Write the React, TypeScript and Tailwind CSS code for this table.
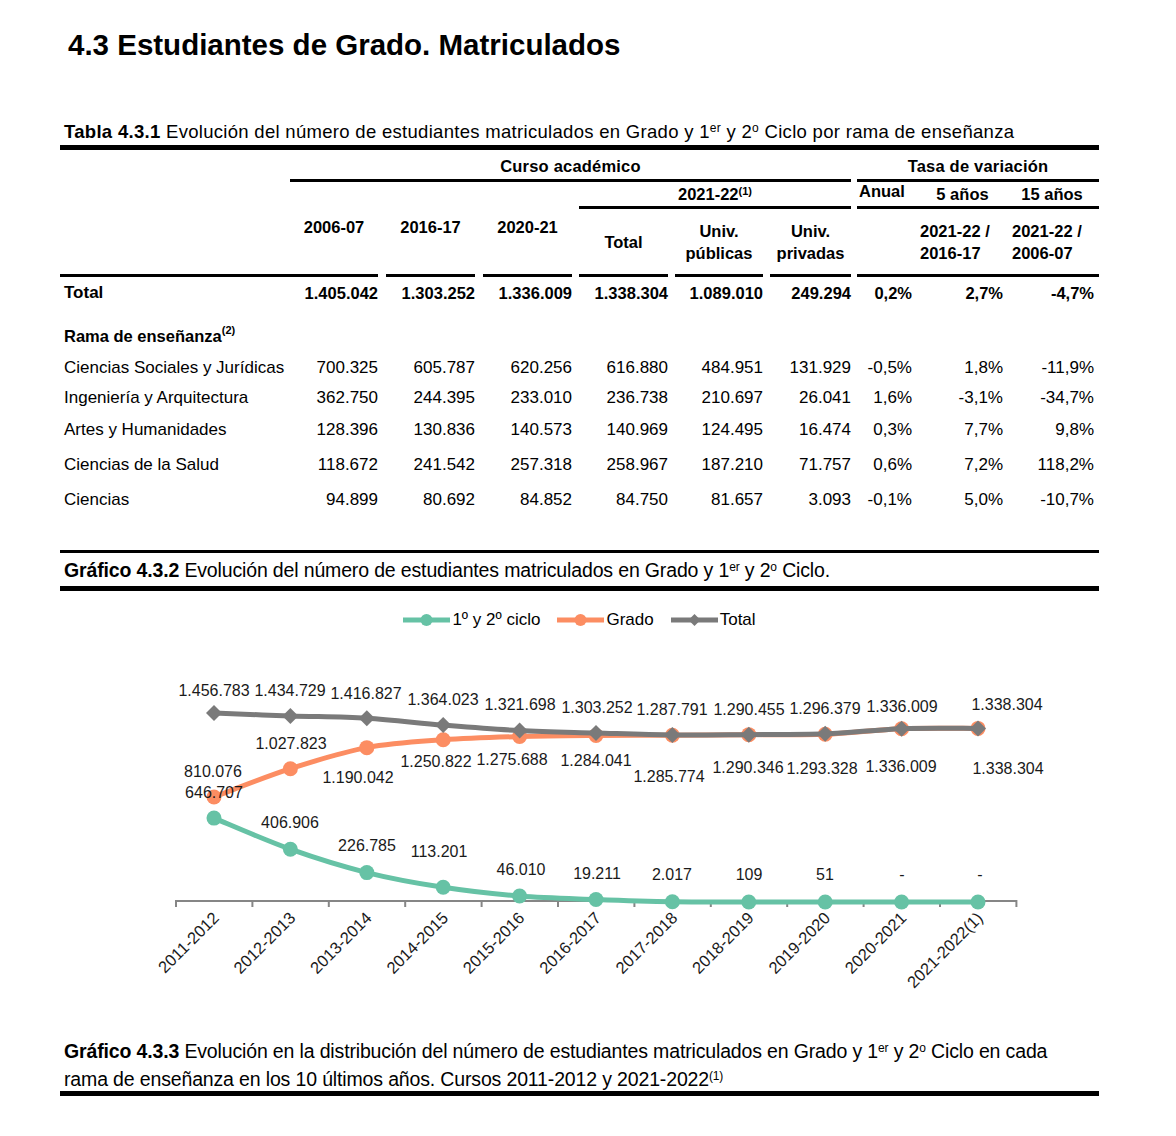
import React from "react";

const GRID =
  "grid grid-cols-[230px_88px_97px_97px_96px_95px_88px_61px_91px_96px]";

const TOTAL_ROW = [
  "1.405.042",
  "1.303.252",
  "1.336.009",
  "1.338.304",
  "1.089.010",
  "249.294",
  "0,2%",
  "2,7%",
  "-4,7%",
];

const ROWS: { label: string; values: string[]; mt: string }[] = [
  {
    label: "Ciencias Sociales y Jurídicas",
    values: ["700.325", "605.787", "620.256", "616.880", "484.951", "131.929", "-0,5%", "1,8%", "-11,9%"],
    mt: "mt-[2px]",
  },
  {
    label: "Ingeniería y Arquitectura",
    values: ["362.750", "244.395", "233.010", "236.738", "210.697", "26.041", "1,6%", "-3,1%", "-34,7%"],
    mt: "mt-0",
  },
  {
    label: "Artes y Humanidades",
    values: ["128.396", "130.836", "140.573", "140.969", "124.495", "16.474", "0,3%", "7,7%", "9,8%"],
    mt: "mt-[2px]",
  },
  {
    label: "Ciencias de la Salud",
    values: ["118.672", "241.542", "257.318", "258.967", "187.210", "71.757", "0,6%", "7,2%", "118,2%"],
    mt: "mt-[5px]",
  },
  {
    label: "Ciencias",
    values: ["94.899", "80.692", "84.852", "84.750", "81.657", "3.093", "-0,1%", "5,0%", "-10,7%"],
    mt: "mt-[5px]",
  },
];

const YEARS = [
  "2011-2012",
  "2012-2013",
  "2013-2014",
  "2014-2015",
  "2015-2016",
  "2016-2017",
  "2017-2018",
  "2018-2019",
  "2019-2020",
  "2020-2021",
  "2021-2022(1)",
];

const TOTAL = [1456783, 1434729, 1416827, 1364023, 1321698, 1303252, 1287791, 1290455, 1296379, 1336009, 1338304];
const GRADO = [810076, 1027823, 1190042, 1250822, 1275688, 1284041, 1285774, 1290346, 1293328, 1336009, 1338304];
const CICLO = [646707, 406906, 226785, 113201, 46010, 19211, 2017, 109, 51, 0, 0];

// label text + centre position, read off the original chart
const TOTAL_LABELS: [string, number, number][] = [
  ["1.456.783", 214, 690],
  ["1.434.729", 290, 690],
  ["1.416.827", 366, 693],
  ["1.364.023", 443, 699],
  ["1.321.698", 520, 704],
  ["1.303.252", 597, 707],
  ["1.287.791", 672, 709],
  ["1.290.455", 749, 709],
  ["1.296.379", 825, 708],
  ["1.336.009", 902, 706],
  ["1.338.304", 1007, 704],
];
const GRADO_LABELS: [string, number, number][] = [
  ["810.076", 213, 771],
  ["1.027.823", 291, 743],
  ["1.190.042", 358, 777],
  ["1.250.822", 436, 761],
  ["1.275.688", 512, 759],
  ["1.284.041", 596, 760],
  ["1.285.774", 669, 776],
  ["1.290.346", 748, 767],
  ["1.293.328", 822, 768],
  ["1.336.009", 901, 766],
  ["1.338.304", 1008, 768],
];
const CICLO_LABELS: [string, number, number][] = [
  ["646.707", 214, 792],
  ["406.906", 290, 822],
  ["226.785", 367, 845],
  ["113.201", 439, 851],
  ["46.010", 521, 869],
  ["19.211", 597, 873],
  ["2.017", 672, 874],
  ["109", 749, 874],
  ["51", 825, 874],
  ["-", 902, 874],
  ["-", 980, 874],
];

const TEAL = "#66c2a5";
const ORANGE = "#fc8d62";
const GRAY = "#7a7a7a";

const X0 = 214;
const DX = 76.4;
const xOf = (i: number) => X0 + i * DX;
const yOf = (v: number) => 902 - v * 0.0001297;

function smoothPath(values: number[]) {
  const pts = values.map((v, i) => [xOf(i), yOf(v)]);
  let d = `M${pts[0][0]},${pts[0][1]}`;
  for (let i = 0; i < pts.length - 1; i++) {
    const p0 = pts[i - 1] || pts[i];
    const p1 = pts[i];
    const p2 = pts[i + 1];
    const p3 = pts[i + 2] || p2;
    const t = 1 / 6;
    const c1x = p1[0] + (p2[0] - p0[0]) * t;
    const c1y = p1[1] + (p2[1] - p0[1]) * t;
    const c2x = p2[0] - (p3[0] - p1[0]) * t;
    const c2y = p2[1] - (p3[1] - p1[1]) * t;
    d += ` C${c1x},${c1y} ${c2x},${c2y} ${p2[0]},${p2[1]}`;
  }
  return d;
}

function Diamond({ x, y, r }: { x: number; y: number; r: number }) {
  return <polygon points={`${x},${y - r} ${x + r},${y} ${x},${y + r} ${x - r},${y}`} fill={GRAY} />;
}

function LegendItem({ color, label, diamond }: { color: string; label: string; diamond?: boolean }) {
  return (
    <div className="flex items-center gap-[2px]">
      <svg width="47" height="14" viewBox="0 0 47 14">
        <line x1="0" y1="7" x2="47" y2="7" stroke={color} strokeWidth="5" />
        {diamond ? (
          <polygon points="23.5,1 29.5,7 23.5,13 17.5,7" fill={color} />
        ) : (
          <circle cx="23.5" cy="7" r="6" fill={color} />
        )}
      </svg>
      <span>{label}</span>
    </div>
  );
}

function Chart() {
  return (
    <svg width="1039" height="380" viewBox="60 630 1039 380" className="block">
      {/* axis */}
      <line x1="176" y1="901" x2="1016" y2="901" stroke="#868686" strokeWidth="2" />
      {Array.from({ length: 12 }).map((_, i) => (
        <line key={i} x1={176 + i * DX} y1="900" x2={176 + i * DX} y2="907" stroke="#868686" strokeWidth="2" />
      ))}

      <path d={smoothPath(CICLO)} fill="none" stroke={TEAL} strokeWidth="5" />
      {CICLO.map((v, i) => (
        <circle key={i} cx={xOf(i)} cy={yOf(v)} r="7.5" fill={TEAL} />
      ))}

      <path d={smoothPath(GRADO)} fill="none" stroke={ORANGE} strokeWidth="5" />
      {GRADO.map((v, i) => (
        <circle key={i} cx={xOf(i)} cy={yOf(v)} r="7.5" fill={ORANGE} />
      ))}

      <path d={smoothPath(TOTAL)} fill="none" stroke={GRAY} strokeWidth="5" />
      {TOTAL.map((v, i) => (
        <Diamond key={i} x={xOf(i)} y={yOf(v)} r={8} />
      ))}

      <g fontSize="16" fill="#1a1a1a" textAnchor="middle" dominantBaseline="central">
        {[...TOTAL_LABELS, ...GRADO_LABELS, ...CICLO_LABELS].map(([t, x, y], i) => (
          <text key={i} x={x} y={y}>
            {t}
          </text>
        ))}
      </g>

      <g fontSize="16.5" fill="#1a1a1a" textAnchor="end">
        {YEARS.map((yr, i) => {
          const x = xOf(i) + 6;
          const y = 919;
          return (
            <text key={yr} x={x} y={y} transform={`rotate(-45 ${x} ${y})`}>
              {yr}
            </text>
          );
        })}
      </g>
    </svg>
  );
}

export default function App() {
  return (
    <div className="min-h-[1136px] bg-white font-['Liberation_Sans',Arial,sans-serif] text-black">
      <div className="ml-[60px] w-[1039px]">
        <h1 className="pl-[8px] pt-[28px] text-[29.5px] font-bold leading-[34px]">
          4.3 Estudiantes de Grado. Matriculados
        </h1>

        <p className="mt-[59px] pl-[4px] text-[18.5px] leading-[22px] tracking-[0.3px]">
          <b>Tabla 4.3.1</b> Evolución del número de estudiantes matriculados en Grado y 1
          <sup className="text-[12px]">er</sup> y 2<sup className="text-[12px]">o</sup> Ciclo por rama de enseñanza
        </p>
        <div className="mt-[2px] h-[5px] bg-black" />

        {/* table header */}
        <div className={`${GRID} grid-rows-[32px_27px_68px] text-[16.5px] font-bold leading-[22px]`}>
          <div className="col-span-6 col-start-2 row-start-1 border-b-[3px] border-black pt-[5px] text-center tracking-[0.2px]">
            Curso académico
          </div>
          <div className="col-span-3 col-start-8 row-start-1 ml-[6px] border-b-[3px] border-black pt-[5px] text-center tracking-[0.2px]">
            Tasa de variación
          </div>

          <div className="col-start-1 row-span-2 row-start-2 border-b-[3px] border-black" />
          <div className="col-start-2 row-span-2 row-start-2 border-b-[3px] border-black pt-[34px] text-center">2006-07</div>
          <div className="col-start-3 row-span-2 row-start-2 ml-[8px] border-b-[3px] border-black pt-[34px] text-center">
            2016-17
          </div>
          <div className="col-start-4 row-span-2 row-start-2 ml-[8px] border-b-[3px] border-black pt-[34px] text-center">
            2020-21
          </div>

          <div className="col-span-3 col-start-5 row-start-2 ml-[7px] border-b-[3px] border-black pt-[1px] text-center">
            2021-22<sup className="text-[11px]">(1)</sup>
          </div>
          <div className="col-start-8 row-start-2 ml-[6px] border-b-[3px] border-black pl-[2px] leading-[18px]">Anual</div>
          <div className="col-start-9 row-start-2 border-b-[3px] border-black pt-[1px] pl-[10px] text-center">5 años</div>
          <div className="col-start-10 row-start-2 border-b-[3px] border-black pt-[1px] pl-[2px] text-center">15 años</div>

          <div className="col-start-5 row-start-3 ml-[7px] border-b-[3px] border-black pt-[22px] text-center">Total</div>
          <div className="col-start-6 row-start-3 ml-[7px] border-b-[3px] border-black pt-[11px] text-center">
            Univ.
            <br />
            públicas
          </div>
          <div className="col-start-7 row-start-3 ml-[7px] border-b-[3px] border-black pt-[11px] text-center">
            Univ.
            <br />
            privadas
          </div>
          <div className="col-start-8 row-start-3 ml-[6px] border-b-[3px] border-black" />
          <div className="col-start-9 row-start-3 border-b-[3px] border-black pt-[11px] pl-[8px]">
            2021-22 /
            <br />
            2016-17
          </div>
          <div className="col-start-10 row-start-3 border-b-[3px] border-black pt-[11px] pl-[9px]">
            2021-22 /
            <br />
            2006-07
          </div>
        </div>

        {/* total row */}
        <div className={`${GRID} mt-[1px] h-[30px] items-center text-[16.5px] font-bold`}>
          <div className="pl-[4px] text-[17px]">Total</div>
          {TOTAL_ROW.map((v, i) => (
            <div key={i} className={i === 8 ? "pr-[5px] text-right" : "text-right"}>
              {v}
            </div>
          ))}
        </div>

        <div className="mt-[13px] flex h-[30px] items-center pl-[4px] text-[16.5px] font-bold">
          Rama de enseñanza<sup className="relative -top-[6px] text-[11px]">(2)</sup>
        </div>

        {ROWS.map((row) => (
          <div key={row.label} className={`${GRID} ${row.mt} h-[30px] items-center text-[17px]`}>
            <div className="pl-[4px]">{row.label}</div>
            {row.values.map((v, i) => (
              <div key={i} className={i === 8 ? "pr-[5px] text-right" : "text-right"}>
                {v}
              </div>
            ))}
          </div>
        ))}

        <div className="mt-[35px] h-[3px] bg-black" />
        <p className="mt-[6px] pl-[4px] text-[19.5px] leading-[22px] tracking-[-0.15px]">
          <b>Gráfico 4.3.2</b> Evolución del número de estudiantes matriculados en Grado y 1
          <sup className="text-[12px]">er</sup> y 2<sup className="text-[12px]">o</sup> Ciclo.
        </p>
        <div className="mt-[5px] h-[5px] bg-black" />

        <div className="mt-[19px] flex h-[20px] items-center justify-center gap-[17px] text-[17px] leading-[20px]">
          <LegendItem color={TEAL} label="1º y 2º ciclo" />
          <LegendItem color={ORANGE} label="Grado" />
          <LegendItem color={GRAY} label="Total" diamond />
        </div>

        <Chart />

        <p className="mt-[27px] pl-[4px] text-[19.5px] leading-[28px] tracking-[-0.15px]">
          <b>Gráfico 4.3.3</b> Evolución en la distribución del número de estudiantes matriculados en Grado y 1
          <sup className="text-[12px]">er</sup> y 2<sup className="text-[12px]">o</sup> Ciclo en cada
          <br />
          rama de enseñanza en los 10 últimos años. Cursos 2011-2012 y 2021-2022<sup className="text-[12px]">(1)</sup>
        </p>
        <div className="-mt-[2px] h-[5px] bg-black" />
      </div>
    </div>
  );
}
